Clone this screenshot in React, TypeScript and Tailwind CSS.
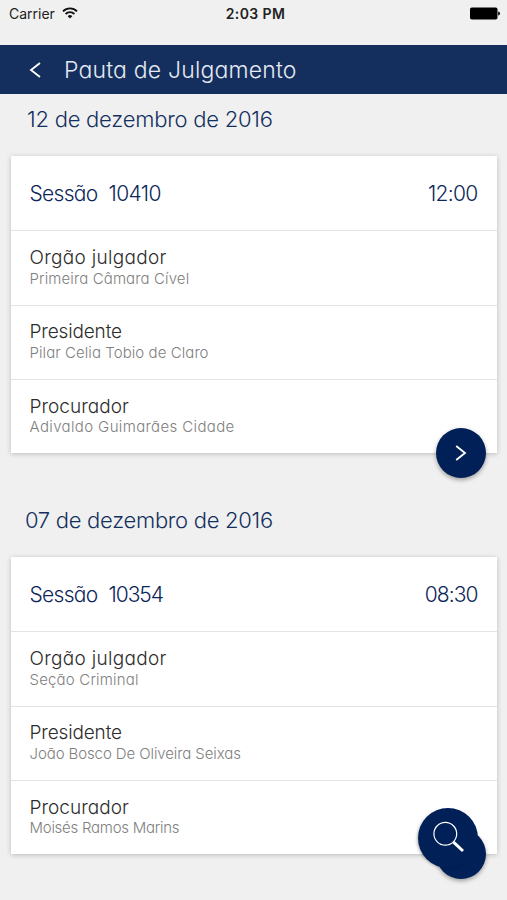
import React from 'react';

interface Field {
  label: string;
  labelClass: string;
  value: string;
  valueClass: string;
}

interface Session {
  date: string;
  dateClass: string;
  number: string;
  numberClass: string;
  time: string;
  timeClass: string;
  fields: Field[];
}

const sessions: Session[] = [
  {
    date: '12 de dezembro de 2016',
    dateClass: 'h-[62px] pt-[9px] pl-[27px] tracking-[-0.24px]',
    number: '10410',
    numberClass: 'tracking-[-0.6px]',
    time: '12:00',
    timeClass: 'tracking-[-0.7px]',
    fields: [
      { label: 'Orgão julgador', labelClass: 'tracking-[0.3px]', value: 'Primeira Câmara Cível', valueClass: 'tracking-[0.12px]' },
      { label: 'Presidente', labelClass: 'tracking-[-0.15px]', value: 'Pilar Celia Tobio de Claro', valueClass: 'tracking-[0.07px]' },
      { label: 'Procurador', labelClass: 'tracking-[0.03px]', value: 'Adivaldo Guimarães Cidade', valueClass: 'tracking-[0.37px]' },
    ],
  },
  {
    date: '07 de dezembro de 2016',
    dateClass: 'h-[104px] pt-[51px] pl-[25px] tracking-[-0.29px]',
    number: '10354',
    numberClass: 'tracking-[-1.05px]',
    time: '08:30',
    timeClass: 'tracking-[-0.95px]',
    fields: [
      { label: 'Orgão julgador', labelClass: 'tracking-[0.3px]', value: 'Seção Criminal', valueClass: 'tracking-[0.18px]' },
      { label: 'Presidente', labelClass: 'tracking-[-0.15px]', value: 'João Bosco De Oliveira Seixas', valueClass: 'tracking-[-0.1px]' },
      { label: 'Procurador', labelClass: 'tracking-[0.03px]', value: 'Moisés Ramos Marins', valueClass: 'tracking-[-0.26px]' },
    ],
  },
];

const StatusBar: React.FC = () => (
  <div className="h-[45px] pt-[4px] px-2 grid grid-cols-3 items-start font-[Inter,sans-serif] text-[#222]">
    <div className="flex items-center pl-px">
      <span className="text-[14px] leading-5">Carrier</span>
      <svg className="ml-[7px] -mt-0.5" width="16" height="12" viewBox="0 0 16 12" fill="none" stroke="#111" strokeWidth="1.9">
        <path d="M1 4.3a9.9 9.9 0 0 1 14 0" />
        <path d="M3.6 7a6.2 6.2 0 0 1 8.8 0" />
        <path d="M8 11.6 5.7 9.2a3.3 3.3 0 0 1 4.6 0Z" fill="#111" stroke="none" />
      </svg>
    </div>
    <span className="pl-1 text-center text-[14px] leading-5 font-semibold tracking-[0.4px]">2:03 PM</span>
    <svg className="justify-self-end mt-[3px] -mr-px" width="30" height="13" viewBox="0 0 30 13">
      <rect x="0" y="0.5" width="27.5" height="12" rx="1.8" fill="#000" />
      <path d="M28.2 4.5c1.1.4 1.8 1.1 1.8 2s-.7 1.6-1.8 2z" fill="#000" />
    </svg>
  </div>
);

const SessionCard: React.FC<{ session: Session }> = ({ session }) => (
  <section>
    <h2 className={`text-[22px] leading-8 text-[#14305f] ${session.dateClass}`}>{session.date}</h2>
    <div className="relative mx-[10.5px] h-[297px] bg-white shadow-[0_1px_5px_rgba(0,0,0,0.22)] grid grid-rows-4">
      <div className="flex items-center justify-between px-[19px] pt-px text-[21px] text-[#0c2759]">
        <span className="flex gap-[11px]">
          <span className="tracking-[-0.7px]">Sessão</span>
          <span className={session.numberClass}>{session.number}</span>
        </span>
        <span className={session.timeClass}>{session.time}</span>
      </div>
      {session.fields.map((field) => (
        <div key={field.label} className="pl-[19px] pt-[14.8px] border-t border-[#e3e3e3]">
          <p className={`w-fit text-[19px] leading-[24px] text-[#2c2c2c] ${field.labelClass}`}>{field.label}</p>
          <p className={`w-fit -mt-[1.4px] text-[15px] leading-[20px] text-[#808080] ${field.valueClass}`}>{field.value}</p>
        </div>
      ))}
      <button className="absolute right-[11px] -bottom-[24.500px] size-[50px] rounded-full bg-[#012057] shadow-[0_2px_4px_rgba(0,0,0,0.35)] flex items-center justify-center">
        <svg width="12" height="16" viewBox="0 0 12 16" fill="none" stroke="#fff" strokeWidth="1.8">
          <path d="M1.2 1 10 8 1.2 15" />
        </svg>
      </button>
    </div>
  </section>
);

export default function App() {
  return (
    <div className="relative w-full h-[900px] overflow-hidden bg-[#f0f0f0]">
      <StatusBar />
      <div className="font-[Inter,sans-serif] font-light [font-feature-settings:'cv11']">
        <header className="h-[49px] bg-[#142e5d] flex items-center pl-[29px] text-[#e4e9f2]">
          <svg width="12" height="16" viewBox="0 0 12 16" fill="none" stroke="#fff" strokeWidth="1.8">
            <path d="M11 1 2 8l9 7" />
          </svg>
          <h1 className="ml-[23px] text-[23px] leading-8 tracking-[0.18px]">Pauta de Julgamento</h1>
        </header>
        {sessions.map((session) => (
          <SessionCard key={session.number} session={session} />
        ))}
      </div>
      <button className="absolute left-[418px] top-[808px] size-[60px] rounded-full bg-[#012057] shadow-[-2px_1px_3px_-1px_rgba(0,0,0,0.3)]">
        <svg className="absolute left-[15px] top-[13px]" width="32" height="32" viewBox="0 0 32 32" fill="none" stroke="#fff">
          <circle cx="12.3" cy="12.8" r="11.4" strokeWidth="1.2" />
          <path d="m20.5 21.2 9.5 8.8" strokeWidth="3" />
        </svg>
      </button>
    </div>
  );
}
